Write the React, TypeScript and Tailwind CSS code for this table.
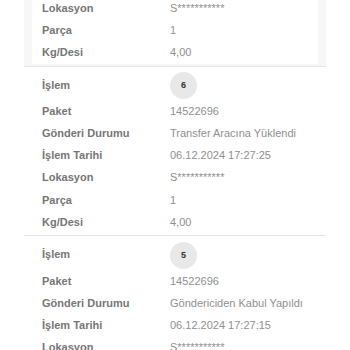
const rows1 = [
  { label: 'Lokasyon', value: 'S***********' },
  { label: 'Parça', value: '1' },
  { label: 'Kg/Desi', value: '4,00' },
];

const steps = [
  {
    no: '6',
    paket: '14522696',
    durum: 'Transfer Aracına Yüklendi',
    tarih: '06.12.2024 17:27:25',
    lokasyon: 'S***********',
    parca: '1',
    kg: '4,00',
  },
  {
    no: '5',
    paket: '14522696',
    durum: 'Göndericiden Kabul Yapıldı',
    tarih: '06.12.2024 17:27:15',
    lokasyon: 'S***********',
    parca: '1',
    kg: '4,00',
  },
];

function Row({ label, value }: { label: string; value: string }) {
  return (
    <div className="flex h-[22.2px] items-center text-[11px]">
      <div className="w-[128px] shrink-0 font-bold text-[#767676]">{label}</div>
      <div className="text-[#8f8f8f]">{value}</div>
    </div>
  );
}

export default function App() {
  return (
    <div
      className="h-[350px] w-[350px] overflow-hidden bg-white"
      style={{ fontFamily: '"Liberation Sans", Arial, sans-serif' }}
    >
      {/* previous item, cut off at the top */}
      <div className="-mt-[3px] mx-[24px] border-b border-[#e4e4e4] bg-[#f7f7f7] px-[8px] pb-[2px]">
        <div className="bg-white pl-[10px]">
          {rows1.map((r) => (
            <Row key={r.label} label={r.label} value={r.value} />
          ))}
        </div>
      </div>

      {steps.map((s) => (
        <div key={s.no} className="mx-[24px] border-b border-[#e4e4e4] pb-[2px] pl-[18px]">
          <div className="flex h-[33.5px] items-center pt-[3px] text-[11px]">
            <div className="w-[128px] shrink-0 font-bold text-[#767676]">İşlem</div>
            <div className="mt-[2px] flex h-[27px] w-[27px] items-center justify-center rounded-full bg-[#e8e8e8] text-[9px] font-bold text-[#333]">
              {s.no}
            </div>
          </div>
          <Row label="Paket" value={s.paket} />
          <Row label="Gönderi Durumu" value={s.durum} />
          <Row label="İşlem Tarihi" value={s.tarih} />
          <Row label="Lokasyon" value={s.lokasyon} />
          <Row label="Parça" value={s.parca} />
          <Row label="Kg/Desi" value={s.kg} />
        </div>
      ))}
    </div>
  );
}
